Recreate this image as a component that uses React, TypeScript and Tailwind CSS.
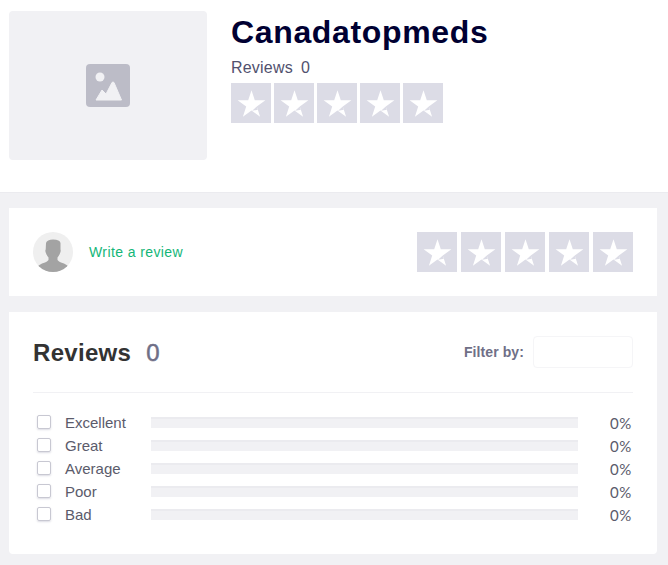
const FONT = "font-['Liberation_Sans',Arial,sans-serif]";

const Star = () => (
  <div className="w-10 h-10 bg-[#dcdce6] shrink-0">
    <svg viewBox="0 0 40 40" className="w-10 h-10 block">
      <path
        d="M20.5 7.2 L23.8 17.3 L34.4 17.3 L25.8 23.5 L29.1 33.7 L20.5 27.4 L11.9 33.7 L15.2 23.5 L6.6 17.3 L17.2 17.3 Z"
        fill="#fff"
      />
      <path d="M25.8 23.5 L26.8 26.7 L21.1 27.8 Z" fill="#dcdce6" />
    </svg>
  </div>
);

const Stars = ({ gap }: { gap: string }) => (
  <div className={`flex ${gap}`}>
    <Star />
    <Star />
    <Star />
    <Star />
    <Star />
  </div>
);

const rows = ['Excellent', 'Great', 'Average', 'Poor', 'Bad'];

export default function App() {
  return (
    <div className={`${FONT} bg-[#f1f1f4] h-[565px] overflow-hidden`}>
      <header className="bg-white h-[193px] pl-[9px] pt-[11px] flex items-start border-b border-[#ebebef]">
        <div className="w-[198px] h-[149px] bg-[#f1f1f4] rounded flex items-center justify-center">
          <svg viewBox="0 0 44 44" className="w-11 h-11 block">
            <rect width="44" height="43" rx="4" fill="#bcbcc7" />
            <circle cx="14" cy="13" r="4.5" fill="#f1f1f4" />
            <path
              d="M10 36 L16 26 L20 30 L26 18.5 Q27 17.5 28 18.5 L35.5 36 Z"
              fill="#f1f1f4"
              stroke="#f1f1f4"
              strokeLinejoin="round"
            />
          </svg>
        </div>
        <div className="ml-6">
          <h1 className="text-[32px] leading-[40px] tracking-[0.65px] font-bold text-[#000032] mt-[1px]">Canadatopmeds</h1>
          <div className="mt-[6px] text-base leading-[20px] tracking-[0.2px] text-[#51516e] flex gap-2">
            <span>Reviews</span>
            <span>0</span>
          </div>
          <div className="mt-[5px]">
            <Stars gap="gap-[3px]" />
          </div>
        </div>
      </header>

      <section className="mx-[9px] mr-[11px] mt-[15px] bg-white h-[88px] pl-6 pr-6 flex items-center justify-between">
        <div className="flex items-center gap-4">
          <div className="w-10 h-10 rounded-full bg-[#efefef] overflow-hidden">
            <svg viewBox="0 0 40 40" className="w-10 h-10 block">
              <path
                d="M13 11 Q14 7.5 20 7.5 Q27 7.5 27.5 11 L27.5 17.5 Q28 18.5 27.3 20.5 Q26 24 24.5 25.5 L24.5 28 Q26 30 31 31.5 Q35 33 36.5 36 L36.5 40 L3.5 40 L3.5 36 Q5 33 9 31.5 Q14 30 15.5 28 L15.5 25.5 Q14 24 12.7 20.5 Q12 18.5 12.7 17.5 Z"
                fill="#a3a3a3"
              />
            </svg>
          </div>
          <span className="text-sm tracking-[0.4px] text-[#14b679]">Write a review</span>
        </div>
        <Stars gap="gap-1" />
      </section>

      <section className="mx-[9px] mr-[11px] mt-4 bg-white h-[242px] px-6 pt-6 rounded-b-sm">
        <div className="flex items-center justify-between h-8">
          <div className="flex items-center gap-[15px] translate-y-[1px] tracking-[0.3px]">
            <h2 className="text-2xl font-bold text-[#333333]">Reviews</h2>
            <span className="text-2xl text-[#6f6f87] [-webkit-text-stroke:0.5px_#6f6f87]">0</span>
          </div>
          <div className="flex items-center gap-[9px]">
            <span className="text-sm font-bold tracking-[0.1px] text-[#6f6f87]">Filter by:</span>
            <div className="w-[100px] h-8 border border-[#f5f5f7] rounded-sm" />
          </div>
        </div>
        <div className="mt-6 border-t border-[#f1f1f4]" />
        <div className="mt-[18px] flex flex-col">
          {rows.map((r) => (
            <div key={r} className="h-[23px] flex items-center">
              <div className="w-[14px] h-[14px] ml-1 -translate-y-px border border-[#c8c8d2] rounded-[2px] shadow-[0_1px_2px_rgba(80,80,120,0.2)]" />
              <span className="ml-[14px] w-[86px] text-[15px] translate-y-px text-[#5b5b6b]">{r}</span>
              <div className="w-[427px] h-[11px] bg-[#f1f1f4] border-t-2 border-[#ebebef]" />
              <span className="ml-auto mr-[1px] text-[15px] translate-y-px font-['Lato',sans-serif] tracking-[0.7px] text-[#5b5b6b]">0%</span>
            </div>
          ))}
        </div>
      </section>
    </div>
  );
}
